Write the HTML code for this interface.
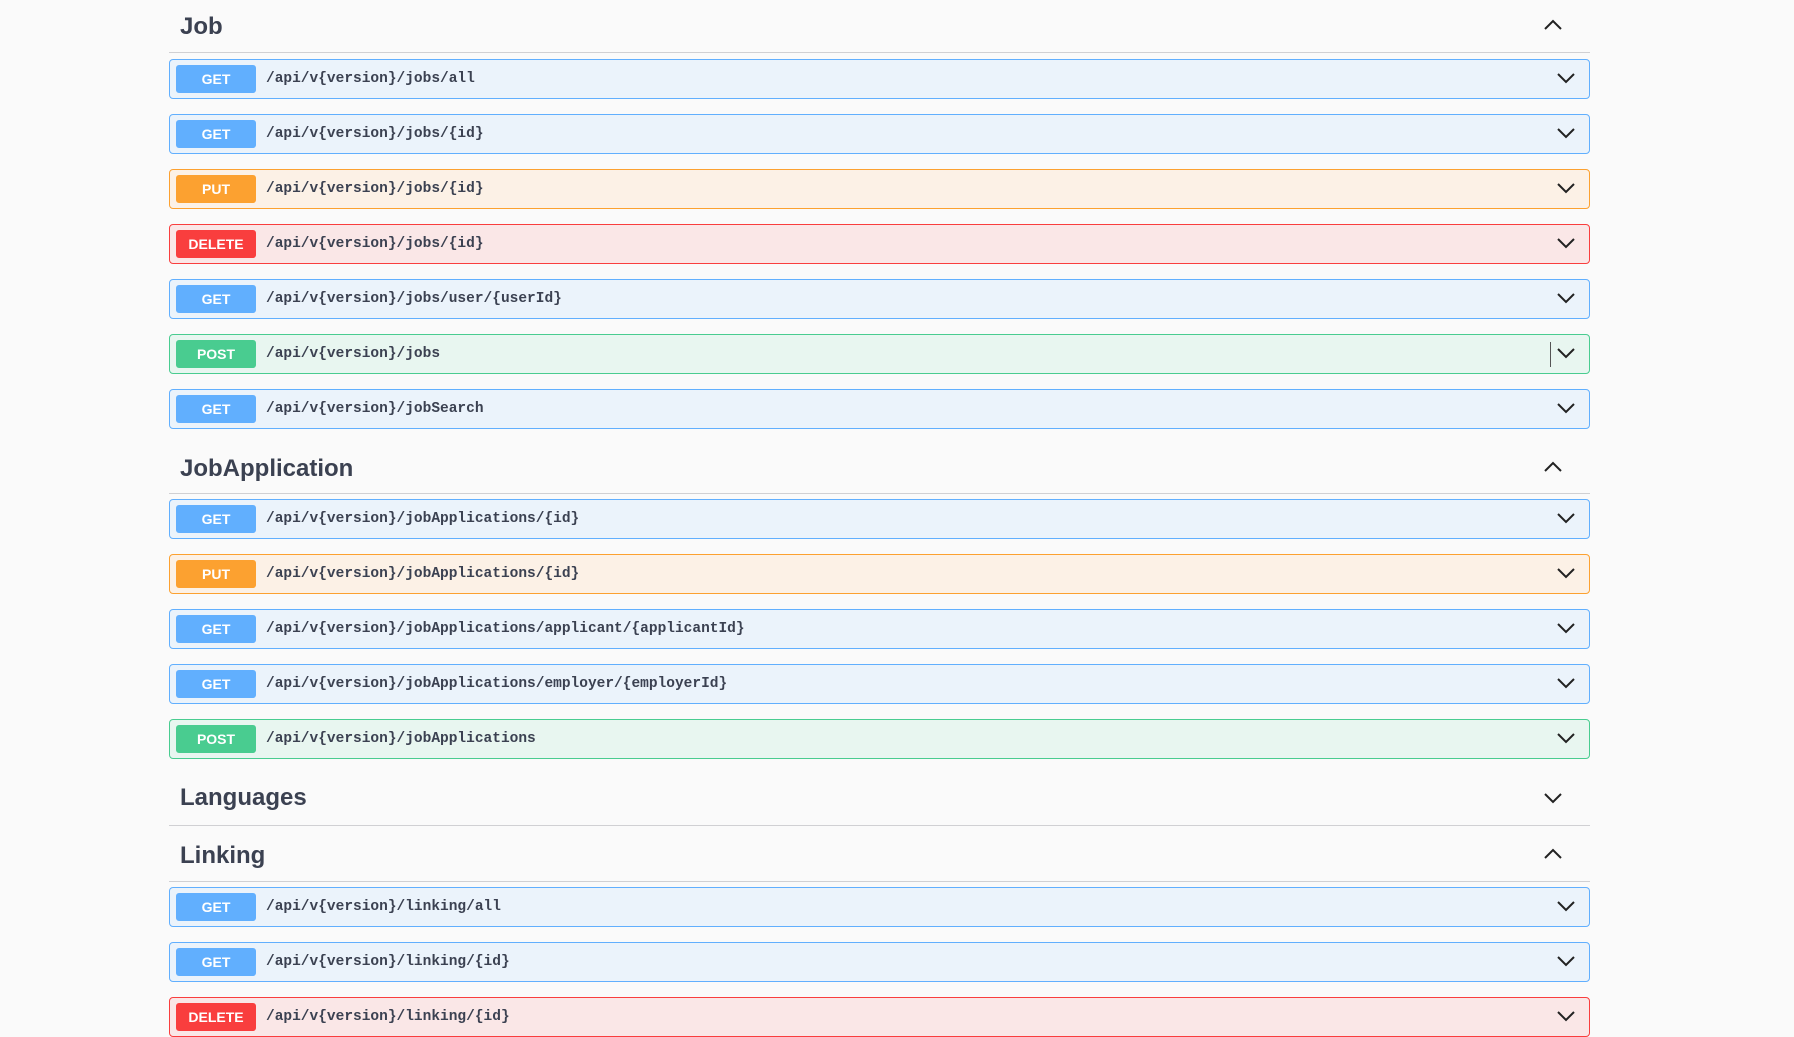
<!DOCTYPE html>
<html><head><meta charset="utf-8"><style>
body{margin:0;background:#fafafa;width:1794px;height:1020px;overflow:hidden;position:relative;font-family:"Liberation Sans",sans-serif;color:#3b4151}
.h{position:absolute;left:169px;width:1421px;border-bottom:1px solid #d0d0d3;height:0}
.ht{position:absolute;left:180px;font-size:24px;font-weight:bold;line-height:30px}
.r{position:absolute;left:169px;width:1419px;height:38px;border:1px solid;border-radius:4px;box-sizing:content-box}
.b{position:absolute;left:6px;top:5px;width:80px;height:28px;border-radius:3px;color:#fff;font-weight:bold;font-size:14px;text-align:center;line-height:28px}
.p{position:absolute;left:96px;top:0;line-height:38px;font-family:"Liberation Mono",monospace;font-weight:bold;font-size:14.5px;color:#3b4151}
.c{position:absolute;right:14px;top:12px}
.g{background:#ebf3fb;border-color:#61affe}.g .b{background:#61affe}
.u{background:#fcf1e6;border-color:#fca130}.u .b{background:#fca130}
.d{background:#fae7e7;border-color:#f93e3e}.d .b{background:#f93e3e}
.o{background:#e8f6f0;border-color:#49cc90}.o .b{background:#49cc90}
.up{position:absolute;left:1544px}
</style></head><body>
<div class="ht" style="top:12px">Job</div>
<svg class="up" style="top:19px" width="18" height="12"><path d="M1 10 L9 2 L17 10" fill="none" stroke="#222" stroke-width="2"/></svg>
<div class="h" style="top:52px"></div>

<div class="r g" style="top:59px"><div class="b">GET</div><div class="p">/api/v{version}/jobs/all</div><svg class="c" width="18" height="12"><path d="M1 2 L9 10 L17 2" fill="none" stroke="#222" stroke-width="2"/></svg></div>
<div class="r g" style="top:114px"><div class="b">GET</div><div class="p">/api/v{version}/jobs/{id}</div><svg class="c" width="18" height="12"><path d="M1 2 L9 10 L17 2" fill="none" stroke="#222" stroke-width="2"/></svg></div>
<div class="r u" style="top:169px"><div class="b">PUT</div><div class="p">/api/v{version}/jobs/{id}</div><svg class="c" width="18" height="12"><path d="M1 2 L9 10 L17 2" fill="none" stroke="#222" stroke-width="2"/></svg></div>
<div class="r d" style="top:224px"><div class="b">DELETE</div><div class="p">/api/v{version}/jobs/{id}</div><svg class="c" width="18" height="12"><path d="M1 2 L9 10 L17 2" fill="none" stroke="#222" stroke-width="2"/></svg></div>
<div class="r g" style="top:279px"><div class="b">GET</div><div class="p">/api/v{version}/jobs/user/{userId}</div><svg class="c" width="18" height="12"><path d="M1 2 L9 10 L17 2" fill="none" stroke="#222" stroke-width="2"/></svg></div>
<div class="r o" style="top:334px"><div class="b">POST</div><div class="p">/api/v{version}/jobs</div><div style="position:absolute;right:38px;top:7px;width:1px;height:25px;background:#555"></div><svg class="c" width="18" height="12"><path d="M1 2 L9 10 L17 2" fill="none" stroke="#222" stroke-width="2"/></svg></div>
<div class="r g" style="top:389px"><div class="b">GET</div><div class="p">/api/v{version}/jobSearch</div><svg class="c" width="18" height="12"><path d="M1 2 L9 10 L17 2" fill="none" stroke="#222" stroke-width="2"/></svg></div>

<div class="ht" style="top:454px">JobApplication</div>
<svg class="up" style="top:461px" width="18" height="12"><path d="M1 10 L9 2 L17 10" fill="none" stroke="#222" stroke-width="2"/></svg>
<div class="h" style="top:493px"></div>

<div class="r g" style="top:499px"><div class="b">GET</div><div class="p">/api/v{version}/jobApplications/{id}</div><svg class="c" width="18" height="12"><path d="M1 2 L9 10 L17 2" fill="none" stroke="#222" stroke-width="2"/></svg></div>
<div class="r u" style="top:554px"><div class="b">PUT</div><div class="p">/api/v{version}/jobApplications/{id}</div><svg class="c" width="18" height="12"><path d="M1 2 L9 10 L17 2" fill="none" stroke="#222" stroke-width="2"/></svg></div>
<div class="r g" style="top:609px"><div class="b">GET</div><div class="p">/api/v{version}/jobApplications/applicant/{applicantId}</div><svg class="c" width="18" height="12"><path d="M1 2 L9 10 L17 2" fill="none" stroke="#222" stroke-width="2"/></svg></div>
<div class="r g" style="top:664px"><div class="b">GET</div><div class="p">/api/v{version}/jobApplications/employer/{employerId}</div><svg class="c" width="18" height="12"><path d="M1 2 L9 10 L17 2" fill="none" stroke="#222" stroke-width="2"/></svg></div>
<div class="r o" style="top:719px"><div class="b">POST</div><div class="p">/api/v{version}/jobApplications</div><svg class="c" width="18" height="12"><path d="M1 2 L9 10 L17 2" fill="none" stroke="#222" stroke-width="2"/></svg></div>

<div class="ht" style="top:783px">Languages</div>
<svg class="up" style="top:792px" width="18" height="12"><path d="M1 2 L9 10 L17 2" fill="none" stroke="#222" stroke-width="2"/></svg>
<div class="h" style="top:825px"></div>

<div class="ht" style="top:841px">Linking</div>
<svg class="up" style="top:848px" width="18" height="12"><path d="M1 10 L9 2 L17 10" fill="none" stroke="#222" stroke-width="2"/></svg>
<div class="h" style="top:881px"></div>

<div class="r g" style="top:887px"><div class="b">GET</div><div class="p">/api/v{version}/linking/all</div><svg class="c" width="18" height="12"><path d="M1 2 L9 10 L17 2" fill="none" stroke="#222" stroke-width="2"/></svg></div>
<div class="r g" style="top:942px"><div class="b">GET</div><div class="p">/api/v{version}/linking/{id}</div><svg class="c" width="18" height="12"><path d="M1 2 L9 10 L17 2" fill="none" stroke="#222" stroke-width="2"/></svg></div>
<div class="r d" style="top:997px"><div class="b">DELETE</div><div class="p">/api/v{version}/linking/{id}</div><svg class="c" width="18" height="12"><path d="M1 2 L9 10 L17 2" fill="none" stroke="#222" stroke-width="2"/></svg></div>
</body></html>
